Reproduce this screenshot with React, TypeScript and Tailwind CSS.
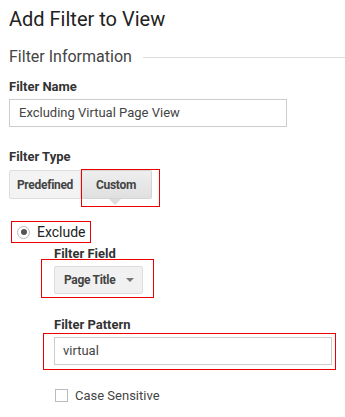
import React from "react";

const App = () => {
  return (
    <div className="min-h-screen w-[345px] bg-white text-[#333] font-['Roboto',sans-serif] pl-[9px]">
      <h1 className="pt-[5px] text-[20px] leading-[28px] text-[#222]">Add Filter to View</h1>

      <div className="mt-[14px] flex items-center gap-[11px]">
        <span className="text-[16px] leading-[20px] text-[#444]">Filter Information</span>
        <div className="flex-1 border-t border-[#ddd]" />
      </div>

      <div className="mt-[12px] text-[13px] font-bold leading-[16px] text-[#333]">Filter Name</div>
      <div className="mt-[4px] flex h-[28px] w-[278px] items-center border border-[#ccc] px-[9px] text-[13px] text-[#444]">
        Excluding Virtual Page View
      </div>

      <div className="mt-[22px] text-[13px] font-bold leading-[16px]">Filter Type</div>
      <div className="relative mt-[5px] flex">
        <div className="flex h-[29px] w-[72px] items-center justify-center rounded-l-[2px] border border-[#ddd] bg-[#f3f3f3] text-[12px] tracking-[-0.3px] font-bold text-[#444]">
          Predefined
        </div>
        <div className="relative flex h-[29px] w-[71px] items-center justify-center rounded-r-[2px] border border-l-0 border-[#d4d4d4] bg-gradient-to-b from-[#eee] to-[#e0e0e0] text-[12px] tracking-[-0.3px] font-bold text-[#444]">
          Custom
          <div className="absolute left-[28px] top-[28px] h-0 w-0 border-x-[6px] border-t-[6px] border-x-transparent border-t-[#ddd]" />
        </div>
        {/* annotation box */}
        <div className="absolute left-[72px] top-[-1px] h-[38px] w-[79px] shadow-[inset_0_0_0_1px_#e00]" />
      </div>

      <div className="mt-[22px] ml-[2px] flex h-[22px] w-[80px] items-center gap-[7px] pl-[6px] shadow-[inset_0_0_0_1px_#e00]">
        <div className="flex h-[13px] w-[13px] items-center justify-center rounded-full border border-[#bbb] bg-white">
          <div className="h-[6px] w-[6px] rounded-full bg-[#555]" />
        </div>
        <span className="text-[14px] text-[#222]">Exclude</span>
      </div>

      <div className="ml-[45px]">
        <div className="mt-[3px] text-[13px] font-bold leading-[16px]">Filter Field</div>
        <div className="relative ml-[-13px] mt-[-3px] w-[113px] px-[13px] pb-[4px] pt-[7px] shadow-[inset_0_0_0_1px_#e00]">
          <div className="flex h-[28px] w-[89px] items-center justify-between rounded-[2px] border border-[#ddd] bg-[#f1f1f1] pl-[9px] pr-[8px] text-[12px] tracking-[-0.3px] font-bold text-[#444]">
            Page Title
            <div className="h-0 w-0 border-x-[4px] border-t-[4px] border-x-transparent border-t-[#777]" />
          </div>
        </div>

        <div className="mt-[19px] text-[13px] font-bold leading-[16px]">Filter Pattern</div>
        <div className="ml-[-11px] w-[293px] pb-[5px] pl-[11px] pr-[4px] pt-[4px] shadow-[inset_0_0_0_1px_#e00]">
          <div className="flex h-[28px] w-[278px] items-center border border-[#ccc] px-[8px] text-[13px] text-[#444]">
            virtual
          </div>
        </div>

        <div className="mt-[19px] flex items-center gap-[7px] pl-[1px]">
          <div className="h-[13px] w-[13px] border border-[#bbb] bg-white" />
          <span className="text-[13px] leading-[13px] text-[#444]">Case Sensitive</span>
        </div>
      </div>
    </div>
  );
};

export default App;
